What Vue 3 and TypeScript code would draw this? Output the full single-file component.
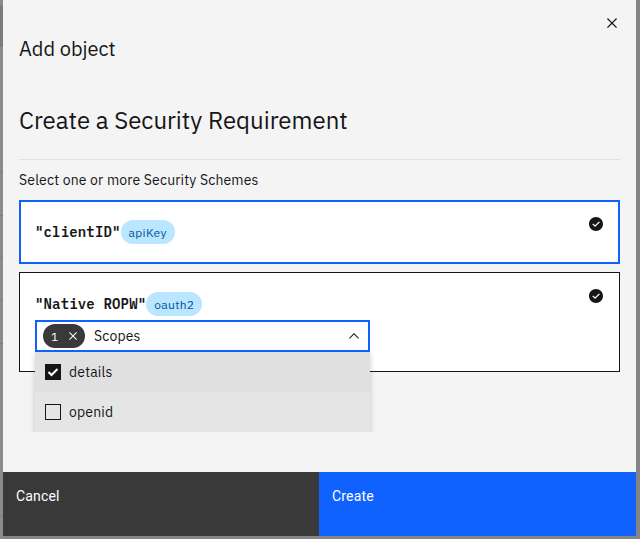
<script setup lang="ts">
import { ref } from 'vue'

interface Scope {
  name: string
  checked: boolean
}

const scopes = ref<Scope[]>([
  { name: 'details', checked: true },
  { name: 'openid', checked: false },
])
</script>

<template>
  <div class="backdrop">
    <section class="modal">
      <header class="header">
        <h3 class="label">Add object</h3>
        <button class="close" aria-label="Close">
          <svg width="20" height="20" viewBox="0 0 32 32"><path fill="#161616" d="M24 9.4 22.6 8 16 14.6 9.4 8 8 9.4l6.6 6.6L8 22.6 9.4 24l6.6-6.6 6.6 6.6 1.4-1.4-6.6-6.6z" /></svg>
        </button>
      </header>

      <div class="body">
        <h2 class="title">Create a Security Requirement</h2>
        <p class="hint">Select one or more Security Schemes</p>

        <article class="tile focused">
          <div class="scheme">
            <strong class="name">"clientID"</strong><span class="tag">apiKey</span>
          </div>
          <svg class="check" width="16" height="16" viewBox="0 0 16 16"><path fill="#161616" d="M8 1C4.1 1 1 4.1 1 8s3.1 7 7 7 7-3.1 7-7-3.1-7-7-7zM7 11 4.3 8.3l.9-.8L7 9.3l4-3.9.9.8L7 11z" /></svg>
        </article>

        <article class="tile tall">
          <div class="scheme">
            <strong class="name">"Native ROPW"</strong><span class="tag oauth">oauth2</span>
          </div>
          <svg class="check" width="16" height="16" viewBox="0 0 16 16"><path fill="#161616" d="M8 1C4.1 1 1 4.1 1 8s3.1 7 7 7 7-3.1 7-7-3.1-7-7-7zM7 11 4.3 8.3l.9-.8L7 9.3l4-3.9.9.8L7 11z" /></svg>
          <div class="select">
            <div class="field">
              <span class="count">
                <span class="num">1</span>
                <svg width="16" height="16" viewBox="0 0 32 32"><path fill="#fff" d="M24 9.4 22.6 8 16 14.6 9.4 8 8 9.4l6.6 6.6L8 22.6 9.4 24l6.6-6.6 6.6 6.6 1.4-1.4-6.6-6.6z" /></svg>
              </span>
              <span class="placeholder">Scopes</span>
              <svg width="16" height="16" viewBox="0 0 16 16"><path fill="#161616" d="m8 5 5 5-.7.7L8 6.4l-4.3 4.3L3 10z" /></svg>
            </div>
            <div class="clip">
              <ul class="menu">
                <li v-for="s in scopes" :key="s.name" class="option" :class="{ active: s.checked }" @click="s.checked = !s.checked">
                  <span class="box" :class="{ on: s.checked }">
                    <svg v-if="s.checked" width="16" height="16" viewBox="0 0 16 16"><path fill="none" stroke="#fff" stroke-width="2" d="m3.5 8 3 3 6-6" /></svg>
                  </span>
                  <span class="text">{{ s.name }}</span>
                </li>
              </ul>
            </div>
          </div>
        </article>
      </div>

      <footer class="footer">
        <button class="btn">Cancel</button>
        <button class="btn primary">Create</button>
      </footer>
    </section>
  </div>
</template>

<style>
body {
  margin: 0;
  overflow: hidden;
}
</style>

<style scoped>
* {
  box-sizing: border-box;
}
.backdrop {
  width: 640px;
  height: 539px;
  padding: 0 4px 3px 3px;
  background:
    linear-gradient(#7b7b7b, #7b7b7b) 0 6px / 3px 41px no-repeat,
    linear-gradient(#7c7c7c, #7c7c7c) 0 172px / 3px 1px no-repeat,
    linear-gradient(#7c7c7c, #7c7c7c) 0 215px / 3px 1px no-repeat,
    linear-gradient(#7c7c7c, #7c7c7c) 0 257px / 3px 1px no-repeat,
    linear-gradient(#7c7c7c, #7c7c7c) 0 300px / 3px 1px no-repeat,
    linear-gradient(#7c7c7c, #7c7c7c) 0 343px / 3px 1px no-repeat,
    linear-gradient(#7c7c7c, #7c7c7c) 0 515px / 3px 1px no-repeat,
    linear-gradient(#8b8b8b, #8b8b8b) 0 0 / 3px 100% no-repeat,
    #858585;
  color: #161616;
  font-family: 'IBM Plex Sans', Roboto, sans-serif;
}
.modal {
  display: flex;
  flex-direction: column;
  width: 633px;
  height: 536px;
  background: #f4f4f4;
}
.header {
  display: flex;
  justify-content: space-between;
  height: 96px;
  padding: 0 0 0 16px;
}
.label {
  margin: 35px 0 0;
  font-size: 20px;
  font-weight: 400;
  line-height: 28px;
}
.close {
  display: flex;
  align-items: flex-start;
  width: 48px;
  height: 48px;
  padding: 13px 0 0 14px;
  border: 0;
  background: none;
}
.body {
  flex: 1;
  padding: 0 16px;
}
.title {
  height: 64px;
  margin: 0;
  padding-top: 8px;
  border-bottom: 1px solid #e0e0e0;
  font-size: 24px;
  font-weight: 400;
  line-height: 32px;
}
.hint {
  height: 40px;
  margin: 0;
  padding-top: 10px;
  font-size: 14px;
  line-height: 20px;
  letter-spacing: 0.16px;
}
.tile {
  display: grid;
  grid-template-columns: 1fr 16px;
  align-content: start;
  width: 601px;
  height: 64px;
  margin-bottom: 8px;
  padding: 15px;
  border: 1px solid #161616;
  background: #fff;
}
.focused {
  padding: 14px;
  border: 2px solid #0f62fe;
}
.tall {
  height: 100px;
}
.scheme {
  display: flex;
  align-items: center;
  height: 32px;
}
.name {
  font-family: 'IBM Plex Mono', 'Liberation Mono', monospace;
  font-size: 14px;
  font-weight: 600;
  letter-spacing: 0.16px;
}
.tag {
  width: 54px;
  height: 24px;
  padding-left: 8px;
  border-radius: 12px;
  background: #bae6ff;
  color: #00539a;
  font-size: 12px;
  line-height: 25px;
  letter-spacing: 0.32px;
}
.oauth {
  width: 56px;
}
.check {
  width: 16px;
  height: 16px;
}
.select {
  position: relative;
  width: 335px;
}
.field {
  display: flex;
  align-items: center;
  height: 32px;
  padding: 0 6px;
  border: 2px solid #0f62fe;
  background: #fff;
}
.count {
  display: flex;
  align-items: center;
  justify-content: space-between;
  width: 42px;
  height: 24px;
  padding: 0 4px 0 8px;
  border-radius: 12px;
  background: #393939;
  color: #fff;
  font-size: 12px;
}
.placeholder {
  flex: 1;
  padding-left: 9px;
  font-size: 14px;
  line-height: 20px;
  letter-spacing: 0.16px;
}
.clip {
  position: absolute;
  top: 32px;
  left: -8px;
  width: 351px;
  padding: 0 8px;
  overflow: hidden;
}
.menu {
  margin: 0;
  padding: 0;
  background: #e5e5e5;
  box-shadow: 0 2px 6px rgba(0, 0, 0, 0.2);
  list-style: none;
}
.option {
  display: flex;
  align-items: center;
  height: 40px;
  padding-left: 10px;
}
.active {
  background: #e0e0e0;
}
.box {
  width: 16px;
  height: 16px;
  border: 1px solid #161616;
}
.on {
  border: 0;
  background: #161616;
}
.box svg {
  display: block;
}
.text {
  margin-left: 8px;
  font-size: 14px;
  line-height: 20px;
  letter-spacing: 0.16px;
}
.footer {
  display: flex;
  height: 64px;
}
.btn {
  display: flex;
  width: 316px;
  padding: 15px 13px;
  border: 0;
  background: #393939;
  color: #fff;
  font-family: Roboto, sans-serif;
  font-size: 14px;
  font-weight: 400;
  line-height: 18px;
  letter-spacing: 0.16px;
}
.primary {
  width: 317px;
  background: #0f62fe;
}
</style>
